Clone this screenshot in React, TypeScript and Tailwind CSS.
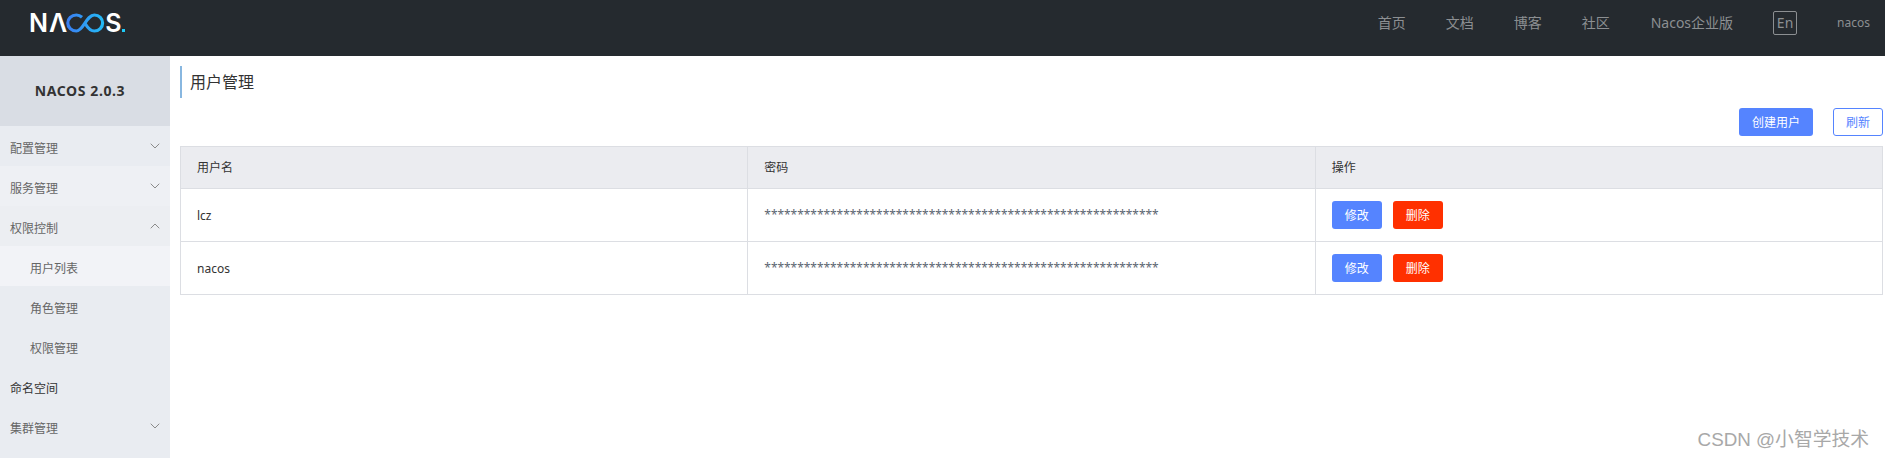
import React from "react";
import { ChevronDown, ChevronUp } from "lucide-react";

const font = "font-['Noto_Sans','Noto_Sans_CJK_SC',sans-serif]";

const menu = [
  { label: "配置管理", icon: "down", bg: "bg-[#e9ecf1]" },
  { label: "服务管理", icon: "down", bg: "bg-[#eef0f4]" },
  { label: "权限控制", icon: "up", bg: "bg-[#eceef2]" },
  { label: "用户列表", sub: true, bg: "bg-[#f2f3f7]" },
  { label: "角色管理", sub: true, bg: "" },
  { label: "权限管理", sub: true, bg: "" },
  { label: "命名空间", dark: true, bg: "" },
  { label: "集群管理", icon: "down", bg: "" },
];

const users = ["lcz", "nacos"];

function Logo() {
  return (
    <div className="flex items-center h-[18px] text-white font-['Inter',sans-serif] font-semibold text-[25px] leading-none" aria-label="NACOS">
      <span className="tracking-[1px]">NΛ</span>
      <svg width="46" height="20" viewBox="0 0 46 20" fill="none" className="-ml-[2px]">
        <defs>
          <linearGradient id="nacos-grad" x1="0" y1="0" x2="46" y2="0" gradientUnits="userSpaceOnUse">
            <stop offset="0" stopColor="#3b7cf2" />
            <stop offset="1" stopColor="#1ec9f6" />
          </linearGradient>
        </defs>
        <path
          d="M16 4.2C14.4 2.8 12.4 2 10.4 2 5.4 2 1.8 5.6 1.8 10s3.6 8 8.6 8c7 0 10-16 18-16 4.8 0 8.2 3.6 8.2 8s-3.4 8-8.2 8c-5.6 0-7.6-5-9.8-8.4"
          stroke="url(#nacos-grad)"
          strokeWidth="3.2"
        />
      </svg>
      <span className="-ml-[7px]">S</span>
      <span className="self-end w-[3px] h-[3px] ml-[1px] bg-[#1ec9f6]" />
    </div>
  );
}

function Header() {
  return (
    <header className="h-14 shrink-0 bg-[#252a2f] flex items-center pl-[29px] pr-[15px] pb-[12px] pt-[2px]">
      <Logo />
      <nav className="ml-auto flex items-center gap-10 text-sm text-[#8c8f92]">
        <span>首页</span>
        <span>文档</span>
        <span>博客</span>
        <span className="mr-[1px]">社区</span>
        <span>Nacos企业版</span>
        <span className="w-6 h-6 flex items-center justify-center border border-[#8c8f92] rounded-[2px]">En</span>
        <span className="text-xs">nacos</span>
      </nav>
    </header>
  );
}

function Sidebar() {
  return (
    <aside className="w-[170px] shrink-0 bg-[#e9ecf1] text-xs">
      <div className="h-[70px] bg-[#d9dde4] flex items-center justify-center pr-[10px] text-sm font-bold tracking-[0.6px] text-[#333]">
        NACOS 2.0.3
      </div>
      {menu.map((item) => (
        <div
          key={item.label}
          className={`h-10 flex items-center justify-between pr-[7px] ${item.sub ? "pl-[30px]" : "pl-[10px]"} ${item.dark ? "text-[#333]" : "text-[#666]"} ${item.bg}`}
        >
          <span className="pt-[6px]">{item.label}</span>
          {item.icon === "down" && <ChevronDown size={16} strokeWidth={1.5} className="text-[#8a8a8a] -mt-[1px]" />}
          {item.icon === "up" && <ChevronUp size={16} strokeWidth={1.5} className="text-[#8a8a8a] -mt-[1px]" />}
        </div>
      ))}
    </aside>
  );
}

function UserTable() {
  return (
    <table className="w-full table-fixed border-collapse border border-[#dcdee3] text-xs text-[#333]">
      <thead>
        <tr className="h-[42px] bg-[#ebecf0] text-left">
          <th className="font-normal border border-[#dcdee3] pl-4">用户名</th>
          <th className="font-normal border border-[#dcdee3] pl-4">密码</th>
          <th className="font-normal border border-[#dcdee3] pl-4">操作</th>
        </tr>
      </thead>
      <tbody>
        {users.map((u) => (
          <tr key={u} className="h-[53px]">
            <td className="border border-[#dcdee3] pl-4 pt-[1px]">{u}</td>
            <td className="border border-[#dcdee3] pl-4 tracking-[-0.04px] text-[#5b6470]">{"*".repeat(60)}</td>
            <td className="border border-[#dcdee3] pl-4">
              <div className="flex gap-[11px]">
                <button className="w-[50px] h-7 pt-[2px] rounded-[3px] bg-[#5584ff] text-white">修改</button>
                <button className="w-[50px] h-7 pt-[2px] rounded-[3px] bg-[#ff3000] text-white">删除</button>
              </div>
            </td>
          </tr>
        ))}
      </tbody>
    </table>
  );
}

export default function App() {
  return (
    <div className={`relative h-[458px] flex flex-col overflow-hidden bg-white ${font}`}>
      <Header />
      <div className="flex flex-1 min-h-0">
        <Sidebar />
        <main className="flex-1 pl-[10px] pr-[2px] pt-[10px]">
          <h1 className="h-8 flex items-center border-l-2 border-[#88b7e0] pl-2 text-base font-normal text-[#333]">
            用户管理
          </h1>
          <div className="mt-[10px] flex justify-end gap-5 text-xs">
            <button className="w-[74px] h-7 pt-[1px] rounded-[3px] bg-[#5584ff] text-white">创建用户</button>
            <button className="w-[50px] h-7 pt-[1px] rounded-[3px] border border-[#5584ff] text-[#5584ff]">刷新</button>
          </div>
          <div className="mt-[10px]">
            <UserTable />
          </div>
        </main>
      </div>
      <div className="absolute right-[16px] top-[427px] font-['Liberation_Sans','Noto_Sans_CJK_SC',sans-serif] text-[18.8px] leading-[26px] text-[#a8a8a8]">CSDN @小智学技术</div>
    </div>
  );
}
